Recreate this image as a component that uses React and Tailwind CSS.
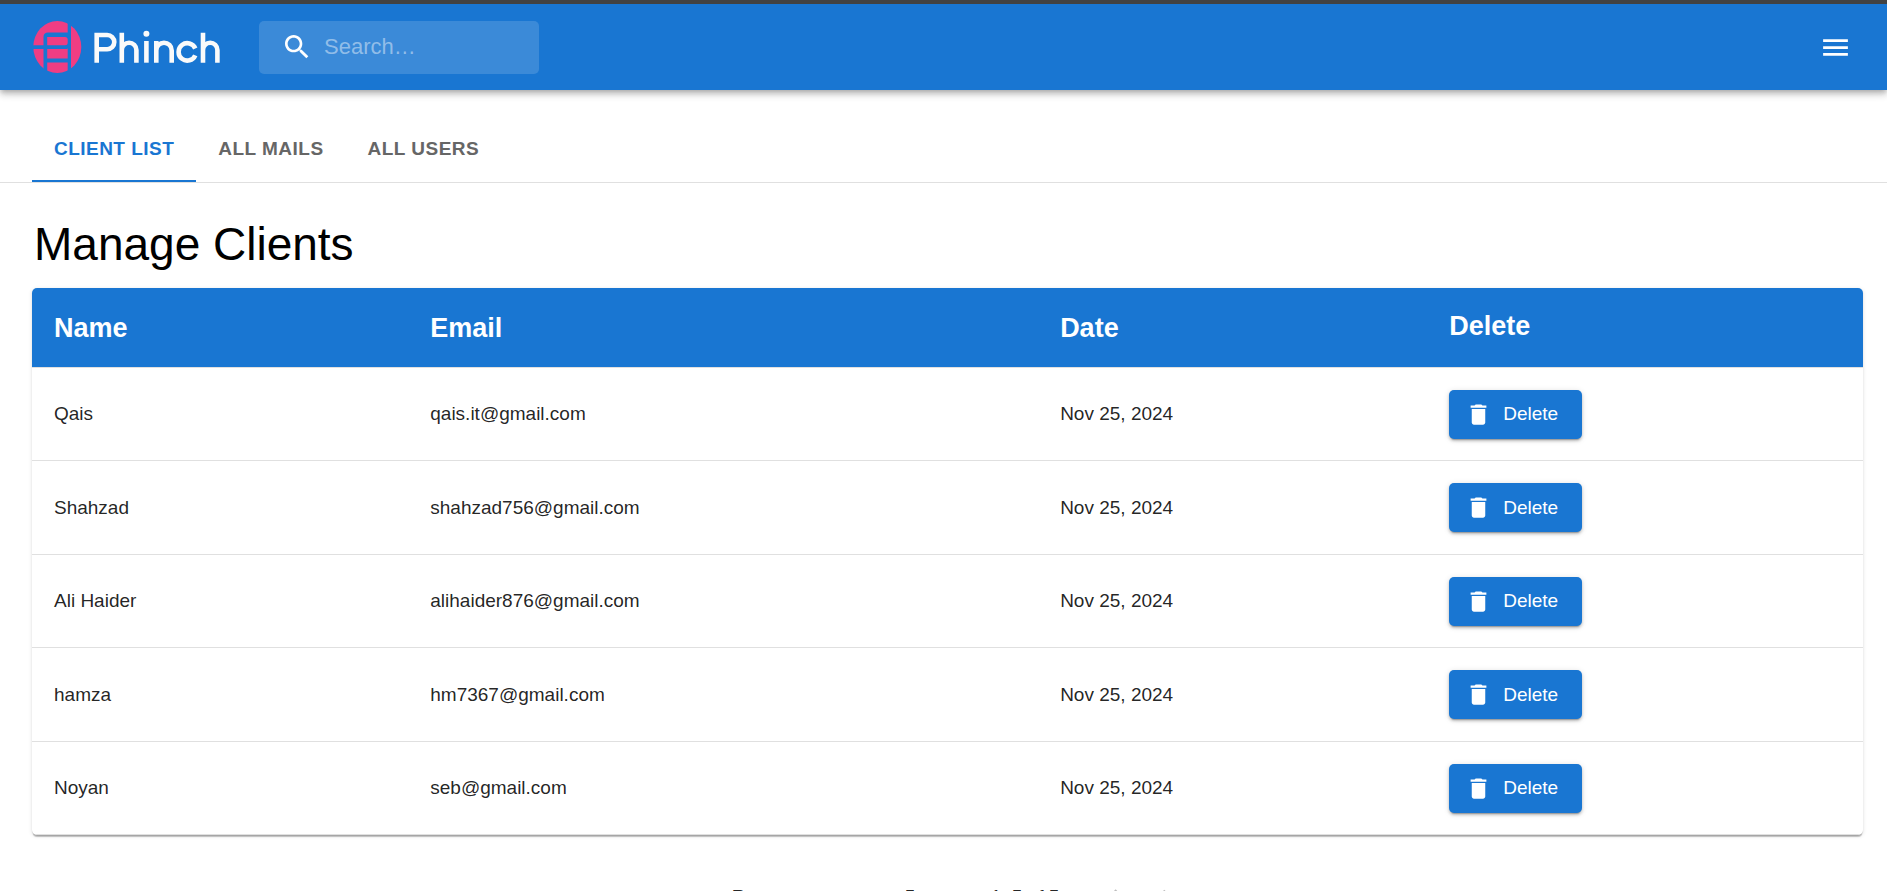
import { useState } from "react";

const tabs = ["Client List", "All Mails", "All Users"];

const clients = [
  { name: "Qais", email: "qais.it@gmail.com", date: "Nov 25, 2024" },
  { name: "Shahzad", email: "shahzad756@gmail.com", date: "Nov 25, 2024" },
  { name: "Ali Haider", email: "alihaider876@gmail.com", date: "Nov 25, 2024" },
  { name: "hamza", email: "hm7367@gmail.com", date: "Nov 25, 2024" },
  { name: "Noyan", email: "seb@gmail.com", date: "Nov 25, 2024" },
];

function Icon({ d, className }) {
  return (
    <svg viewBox="0 0 24 24" fill="currentColor" aria-hidden="true" className={className}>
      <path d={d} />
    </svg>
  );
}

const MENU = "M3 18h18v-2H3v2zm0-5h18v-2H3v2zm0-7v2h18V6H3z";
const SEARCH =
  "M15.5 14h-.79l-.28-.27C15.41 12.59 16 11.11 16 9.5 16 5.91 13.09 3 9.5 3S3 5.91 3 9.5 5.91 16 9.5 16c1.61 0 3.09-.59 4.23-1.57l.27.28v.79l5 4.99L20.49 19l-4.99-5zm-6 0C7.01 14 5 11.99 5 9.5S7.01 5 9.5 5 14 7.01 14 9.5 11.99 14 9.5 14z";
const TRASH = "M6 19c0 1.1.9 2 2 2h8c1.1 0 2-.9 2-2V7H6v12zM19 4h-3.5l-1-1h-5l-1 1H5v2h14V4z";
const CHEVRON_LEFT = "M15.41 16.09l-4.58-4.59 4.58-4.59L14 5.5l-6 6 6 6z";
const CHEVRON_RIGHT = "M8.59 16.34l4.58-4.59-4.58-4.59L10 5.75l6 6-6 6z";
const ARROW_DOWN = "M7 10l5 5 5-5z";

function Logo() {
  return (
    <a href="#" aria-label="Phinch" className="block">
      <svg viewBox="0 0 188 52" className="block h-[52px] w-[188px]" aria-hidden="true">
        <defs>
          <clipPath id="disc">
            <ellipse cx="24.3" cy="26" rx="24" ry="26" />
          </clipPath>
        </defs>
        <g clipPath="url(#disc)" fill="#ef3d83">
          <path d="M0 0H34.7V11.5H15Q10.5 11.5 10.5 16V24.2H0Z" />
          <path d="M38 0H49V52H38Z" />
          <path d="M0 28H10.5V52H0Z" />
          <path d="M14.2 16H32Q34.7 16 34.7 18.5V21.7Q34.7 24.2 32 24.2H14.2Z" />
          <path d="M14.2 28H32Q34 28 34.7 27.4V37.6H14.2Z" />
          <path d="M14.2 41.5H34.7V52H14.2Z" />
        </g>
        <g fill="none" stroke="#fafafa" strokeWidth="4.6">
          <path d="M63.7 41.7V14H74.2A7.1 7.1 0 0 1 74.2 28.2H63.7" />
          <path d="M88.8 11.7V41.7M88.8 29A7.3 7.3 0 0 1 103.4 29V41.7" />
          <path d="M113.4 20V41.7" />
          <path d="M123.3 20V41.7M123.3 29.4A7.7 7.7 0 0 1 138.7 29.4V41.7" />
          <path d="M162.3 27.5A8.7 8.7 0 1 0 162.3 34.3" />
          <path d="M170 11.7V41.7M170 29A7.2 7.2 0 0 1 184.4 29V41.7" />
        </g>
        <circle cx="113.4" cy="12.7" r="3" fill="#fafafa" />
      </svg>
    </a>
  );
}

function Header() {
  return (
    <header className="flex h-[90px] items-center border-t-4 border-[#424242] bg-[#1976d2] pl-[33px] pr-[31px] text-white shadow-[0_2px_5px_-1px_rgba(0,0,0,0.2),0_5px_6px_0_rgba(0,0,0,0.14),0_1px_12px_0_rgba(0,0,0,0.12)]">
      <Logo />
      <label className="ml-[38px] flex h-[53px] w-[280px] items-center rounded-[5px] bg-white/15 pl-[22px]">
        <Icon d={SEARCH} className="size-8 shrink-0" />
        <input
          type="search"
          aria-label="Search"
          placeholder="Search…"
          className="ml-[11px] w-full min-w-0 bg-transparent text-[22px] leading-8 outline-none placeholder:text-white/45"
        />
      </label>
      <button type="button" aria-label="Menu" className="ml-auto p-1">
        <Icon d={MENU} className="size-[33px]" />
      </button>
    </header>
  );
}

function Tabs() {
  const [active, setActive] = useState(0);
  return (
    <nav className="mt-6 flex border-b border-[#e0e0e0] px-8">
      {tabs.map((tab, i) => (
        <button
          key={tab}
          type="button"
          onClick={() => setActive(i)}
          className={
            "h-[68px] border-b-2 px-[22px] pt-1 text-[19px] font-bold uppercase leading-6 tracking-wide " +
            (i === active ? "border-[#1976d2] text-[#1976d2]" : "border-transparent text-[#666666]")
          }
        >
          {tab}
        </button>
      ))}
    </nav>
  );
}

function ClientTable() {
  return (
    <div className="overflow-hidden rounded-[5px] bg-white shadow-[0_3px_1px_-1px_rgba(0,0,0,0.2),0_1px_1px_0_rgba(0,0,0,0.14),0_1px_4px_0_rgba(0,0,0,0.12)]">
      <table className="w-full table-fixed border-separate border-spacing-0 text-left">
        <colgroup>
          <col className="w-[20.55%]" />
          <col className="w-[34.4%]" />
          <col className="w-[21.25%]" />
          <col className="w-[23.8%]" />
        </colgroup>
        <thead>
          <tr className="h-20 bg-[#1976d2] text-[27px] leading-9 text-white *:border-b *:border-[#e0e0e0] *:px-[22px]">
            <th>Name</th>
            <th>Email</th>
            <th>Date</th>
            <th className="pb-1">Delete</th>
          </tr>
        </thead>
        <tbody>
          {clients.map((client) => (
            <tr
              key={client.email}
              className="h-[93px] text-[19px] leading-7 text-black/87 *:border-b *:border-[#e0e0e0] *:px-[22px] even:h-[94px]"
            >
              <td>{client.name}</td>
              <td>{client.email}</td>
              <td>{client.date}</td>
              <td>
                <button
                  type="button"
                  className="flex h-[49px] items-center gap-[11px] rounded-[5px] bg-[#1976d2] pl-4 pr-6 text-white shadow-[0_3px_1px_-2px_rgba(0,0,0,0.2),0_2px_3px_0_rgba(0,0,0,0.2),0_1px_6px_0_rgba(0,0,0,0.12)]"
                >
                  <Icon d={TRASH} className="size-[27px]" />
                  Delete
                </button>
              </td>
            </tr>
          ))}
        </tbody>
      </table>
    </div>
  );
}

function Pagination() {
  return (
    <div className="mt-[29px] flex h-[65px] items-center justify-center pl-5 text-[19px] leading-7 text-black/87">
      <label htmlFor="rows">Rows per page:</label>
      <div className="ml-10 mr-9 grid items-center">
        <select
          id="rows"
          defaultValue="5"
          className="col-start-1 row-start-1 w-[50px] appearance-none bg-transparent"
        >
          <option>5</option>
          <option>10</option>
          <option>25</option>
        </select>
        <Icon
          d={ARROW_DOWN}
          className="pointer-events-none col-start-1 row-start-1 size-8 justify-self-end text-black/54"
        />
      </div>
      <span>1–5 of 5</span>
      <button type="button" disabled aria-label="Previous page" className="ml-[38px] pt-0.5 text-black/26">
        <Icon d={CHEVRON_LEFT} className="size-8" />
      </button>
      <button type="button" disabled aria-label="Next page" className="ml-[22px] pt-0.5 text-black/26">
        <Icon d={CHEVRON_RIGHT} className="size-8" />
      </button>
    </div>
  );
}

export default function App() {
  return (
    <div className="min-h-screen bg-white font-['Liberation_Sans',Arial,sans-serif]">
      <Header />
      <Tabs />
      <main className="pl-8 pr-6 pt-[31px]">
        <h1 className="mb-[14px] pl-0.5 text-[46px] leading-[60px] text-black">Manage Clients</h1>
        <ClientTable />
        <Pagination />
      </main>
    </div>
  );
}
